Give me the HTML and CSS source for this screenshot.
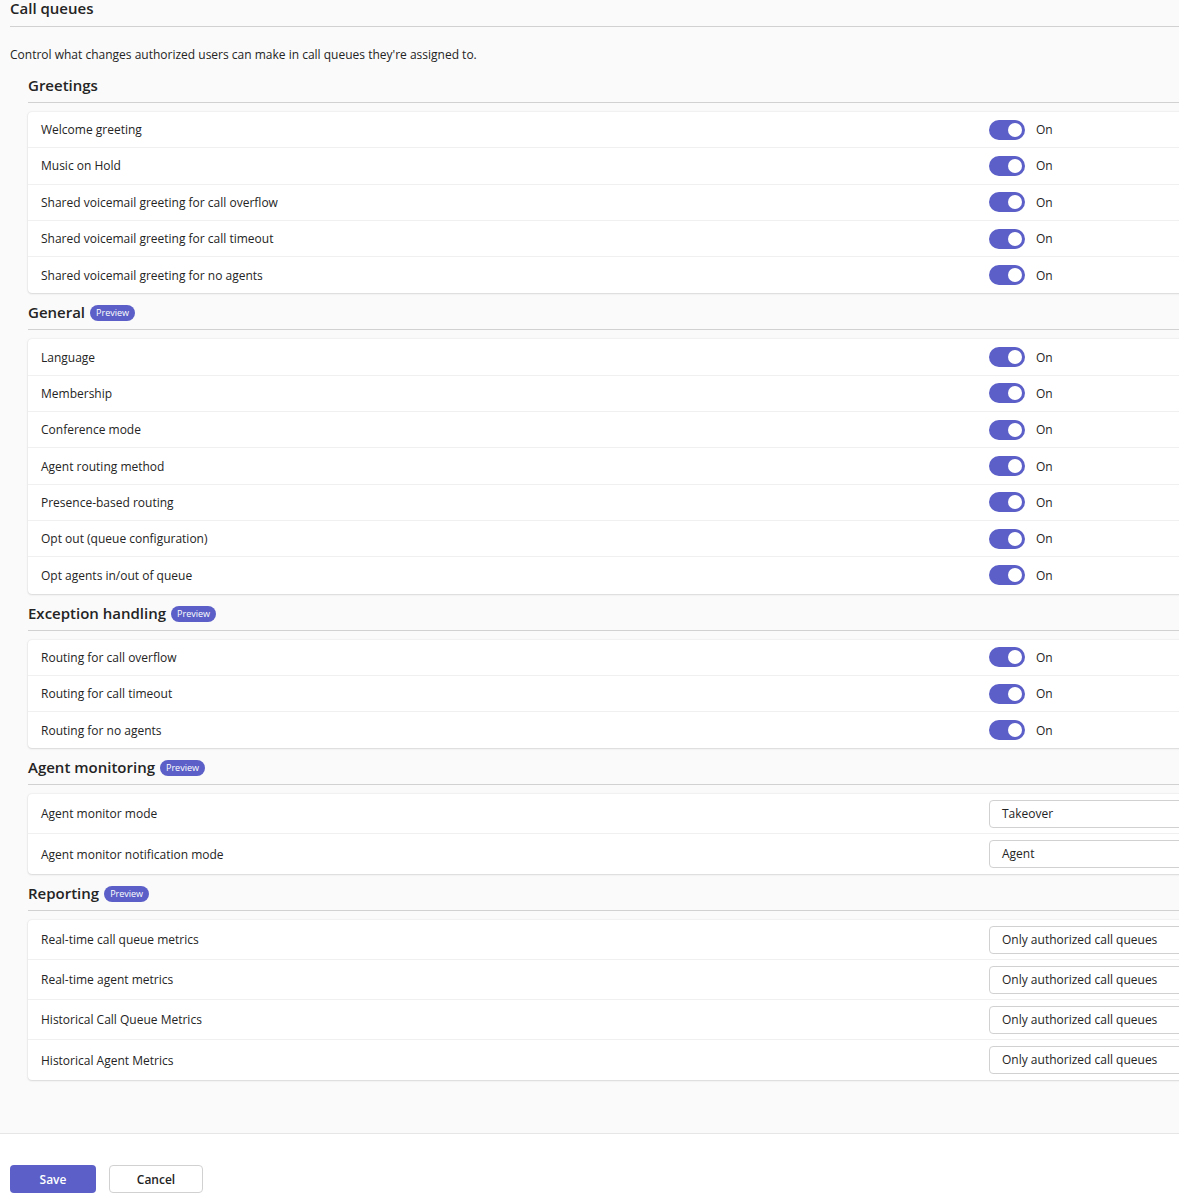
FILE: index.html
```html
<!DOCTYPE html>
<html lang="en">
<head>
<meta charset="utf-8">
<title>Call queues</title>
<link rel="stylesheet" href="styles.css">
</head>
<body>
<div class="main">
  <h1 class="title">Call queues</h1>
  <p class="desc">Control what changes authorized users can make in call queues they're assigned to.</p>

  <section class="section first">
    <h2 class="heading">Greetings</h2>
    <div class="card">
      <div class="row"><span class="label">Welcome greeting</span><span class="toggle-wrap"><span class="toggle"><span class="knob"></span></span><span class="state">On</span></span></div>
      <div class="row"><span class="label">Music on Hold</span><span class="toggle-wrap"><span class="toggle"><span class="knob"></span></span><span class="state">On</span></span></div>
      <div class="row"><span class="label">Shared voicemail greeting for call overflow</span><span class="toggle-wrap"><span class="toggle"><span class="knob"></span></span><span class="state">On</span></span></div>
      <div class="row"><span class="label">Shared voicemail greeting for call timeout</span><span class="toggle-wrap"><span class="toggle"><span class="knob"></span></span><span class="state">On</span></span></div>
      <div class="row"><span class="label">Shared voicemail greeting for no agents</span><span class="toggle-wrap"><span class="toggle"><span class="knob"></span></span><span class="state">On</span></span></div>
    </div>
  </section>

  <section class="section">
    <h2 class="heading">General <span class="badge">Preview</span></h2>
    <div class="card">
      <div class="row"><span class="label">Language</span><span class="toggle-wrap"><span class="toggle"><span class="knob"></span></span><span class="state">On</span></span></div>
      <div class="row"><span class="label">Membership</span><span class="toggle-wrap"><span class="toggle"><span class="knob"></span></span><span class="state">On</span></span></div>
      <div class="row"><span class="label">Conference mode</span><span class="toggle-wrap"><span class="toggle"><span class="knob"></span></span><span class="state">On</span></span></div>
      <div class="row"><span class="label">Agent routing method</span><span class="toggle-wrap"><span class="toggle"><span class="knob"></span></span><span class="state">On</span></span></div>
      <div class="row"><span class="label">Presence-based routing</span><span class="toggle-wrap"><span class="toggle"><span class="knob"></span></span><span class="state">On</span></span></div>
      <div class="row"><span class="label">Opt out (queue configuration)</span><span class="toggle-wrap"><span class="toggle"><span class="knob"></span></span><span class="state">On</span></span></div>
      <div class="row"><span class="label">Opt agents in/out of queue</span><span class="toggle-wrap"><span class="toggle"><span class="knob"></span></span><span class="state">On</span></span></div>
    </div>
  </section>

  <section class="section">
    <h2 class="heading">Exception handling <span class="badge">Preview</span></h2>
    <div class="card">
      <div class="row"><span class="label">Routing for call overflow</span><span class="toggle-wrap"><span class="toggle"><span class="knob"></span></span><span class="state">On</span></span></div>
      <div class="row"><span class="label">Routing for call timeout</span><span class="toggle-wrap"><span class="toggle"><span class="knob"></span></span><span class="state">On</span></span></div>
      <div class="row"><span class="label">Routing for no agents</span><span class="toggle-wrap"><span class="toggle"><span class="knob"></span></span><span class="state">On</span></span></div>
    </div>
  </section>

  <section class="section">
    <h2 class="heading">Agent monitoring <span class="badge">Preview</span></h2>
    <div class="card">
      <div class="row tall"><span class="label">Agent monitor mode</span><span class="select">Takeover</span></div>
      <div class="row tall"><span class="label">Agent monitor notification mode</span><span class="select">Agent</span></div>
    </div>
  </section>

  <section class="section">
    <h2 class="heading">Reporting <span class="badge">Preview</span></h2>
    <div class="card">
      <div class="row tall"><span class="label">Real-time call queue metrics</span><span class="select">Only authorized call queues</span></div>
      <div class="row tall"><span class="label">Real-time agent metrics</span><span class="select">Only authorized call queues</span></div>
      <div class="row tall"><span class="label">Historical Call Queue Metrics</span><span class="select">Only authorized call queues</span></div>
      <div class="row tall"><span class="label">Historical Agent Metrics</span><span class="select">Only authorized call queues</span></div>
    </div>
  </section>
</div>
<div class="footer">
  <button class="btn primary">Save</button>
  <button class="btn secondary">Cancel</button>
</div>
</body>
</html>
```
FILE: styles.css
```css
html, body {
  margin: 0;
  padding: 0;
  overflow: hidden;
}
body {
  background: #ffffff;
  color: #242424;
  font-family: "Open Sans", "Noto Sans", "Liberation Sans", sans-serif;
  font-size: 12px;
}
.main {
  width: 1240px;
  background: #fafafa;
  padding-bottom: 53px;
  border-bottom: 1px solid #e6e6e6;
}
.title {
  margin: -2px 0 0 10px;
  padding: 0 0 8px 0;
  font-size: 15px;
  font-weight: 600;
  line-height: 20px;
  border-bottom: 1px solid #d1d1d1;
}
.desc {
  margin: 19px 0 0 10px;
  line-height: 18px;
}
.section {
  margin: 8px 0 0 28px;
}
.section.first {
  margin-top: 10px;
}
.heading {
  margin: 0;
  padding: 0 0 6px 0;
  font-size: 15px;
  font-weight: 600;
  line-height: 22px;
  border-bottom: 1px solid #d1d1d1;
  display: flex;
  align-items: center;
  gap: 5px;
}
.badge {
  display: inline-block;
  background: #5b5fc7;
  color: #ffffff;
  font-size: 9px;
  font-weight: 400;
  line-height: 16px;
  height: 16px;
  padding: 0 6px;
  border-radius: 8px;
  margin-top: 2px;
}
.card {
  margin-top: 9px;
  background: #ffffff;
  border-radius: 4px;
  box-shadow: 0 0 2px rgba(0,0,0,0.12), 0 1px 2px rgba(0,0,0,0.10);
}
.row {
  display: grid;
  grid-template-columns: 948px 1fr;
  align-items: center;
  height: 36.3px;
  box-sizing: border-box;
  padding-left: 13px;
  border-bottom: 1px solid #f0f0f0;
}
.row:last-child {
  border-bottom: none;
}
.row.tall {
  height: 40px;
}
.toggle-wrap {
  display: flex;
  align-items: center;
  gap: 11px;
}
.toggle {
  width: 36px;
  height: 20px;
  border-radius: 10px;
  background: #5b5fc7;
  display: flex;
  align-items: center;
  justify-content: flex-end;
  padding-right: 3px;
  box-sizing: border-box;
}
.knob {
  width: 14px;
  height: 14px;
  border-radius: 50%;
  background: #ffffff;
}
.select {
  display: block;
  height: 28px;
  box-sizing: border-box;
  border: 1px solid #d1d1d1;
  border-radius: 4px;
  background: #ffffff;
  line-height: 26px;
  padding-left: 12px;
  width: 240px;
}
.footer {
  display: flex;
  gap: 13px;
  padding: 31px 0 0 10px;
  height: 69px;
  box-sizing: border-box;
}
.btn {
  height: 28px;
  border-radius: 4px;
  font-family: inherit;
  font-size: 12px;
  font-weight: 600;
  cursor: pointer;
}
.btn.primary {
  width: 86px;
  background: #5b5fc7;
  color: #ffffff;
  border: none;
}
.btn.secondary {
  width: 94px;
  background: #ffffff;
  color: #242424;
  border: 1px solid #d1d1d1;
}
```
